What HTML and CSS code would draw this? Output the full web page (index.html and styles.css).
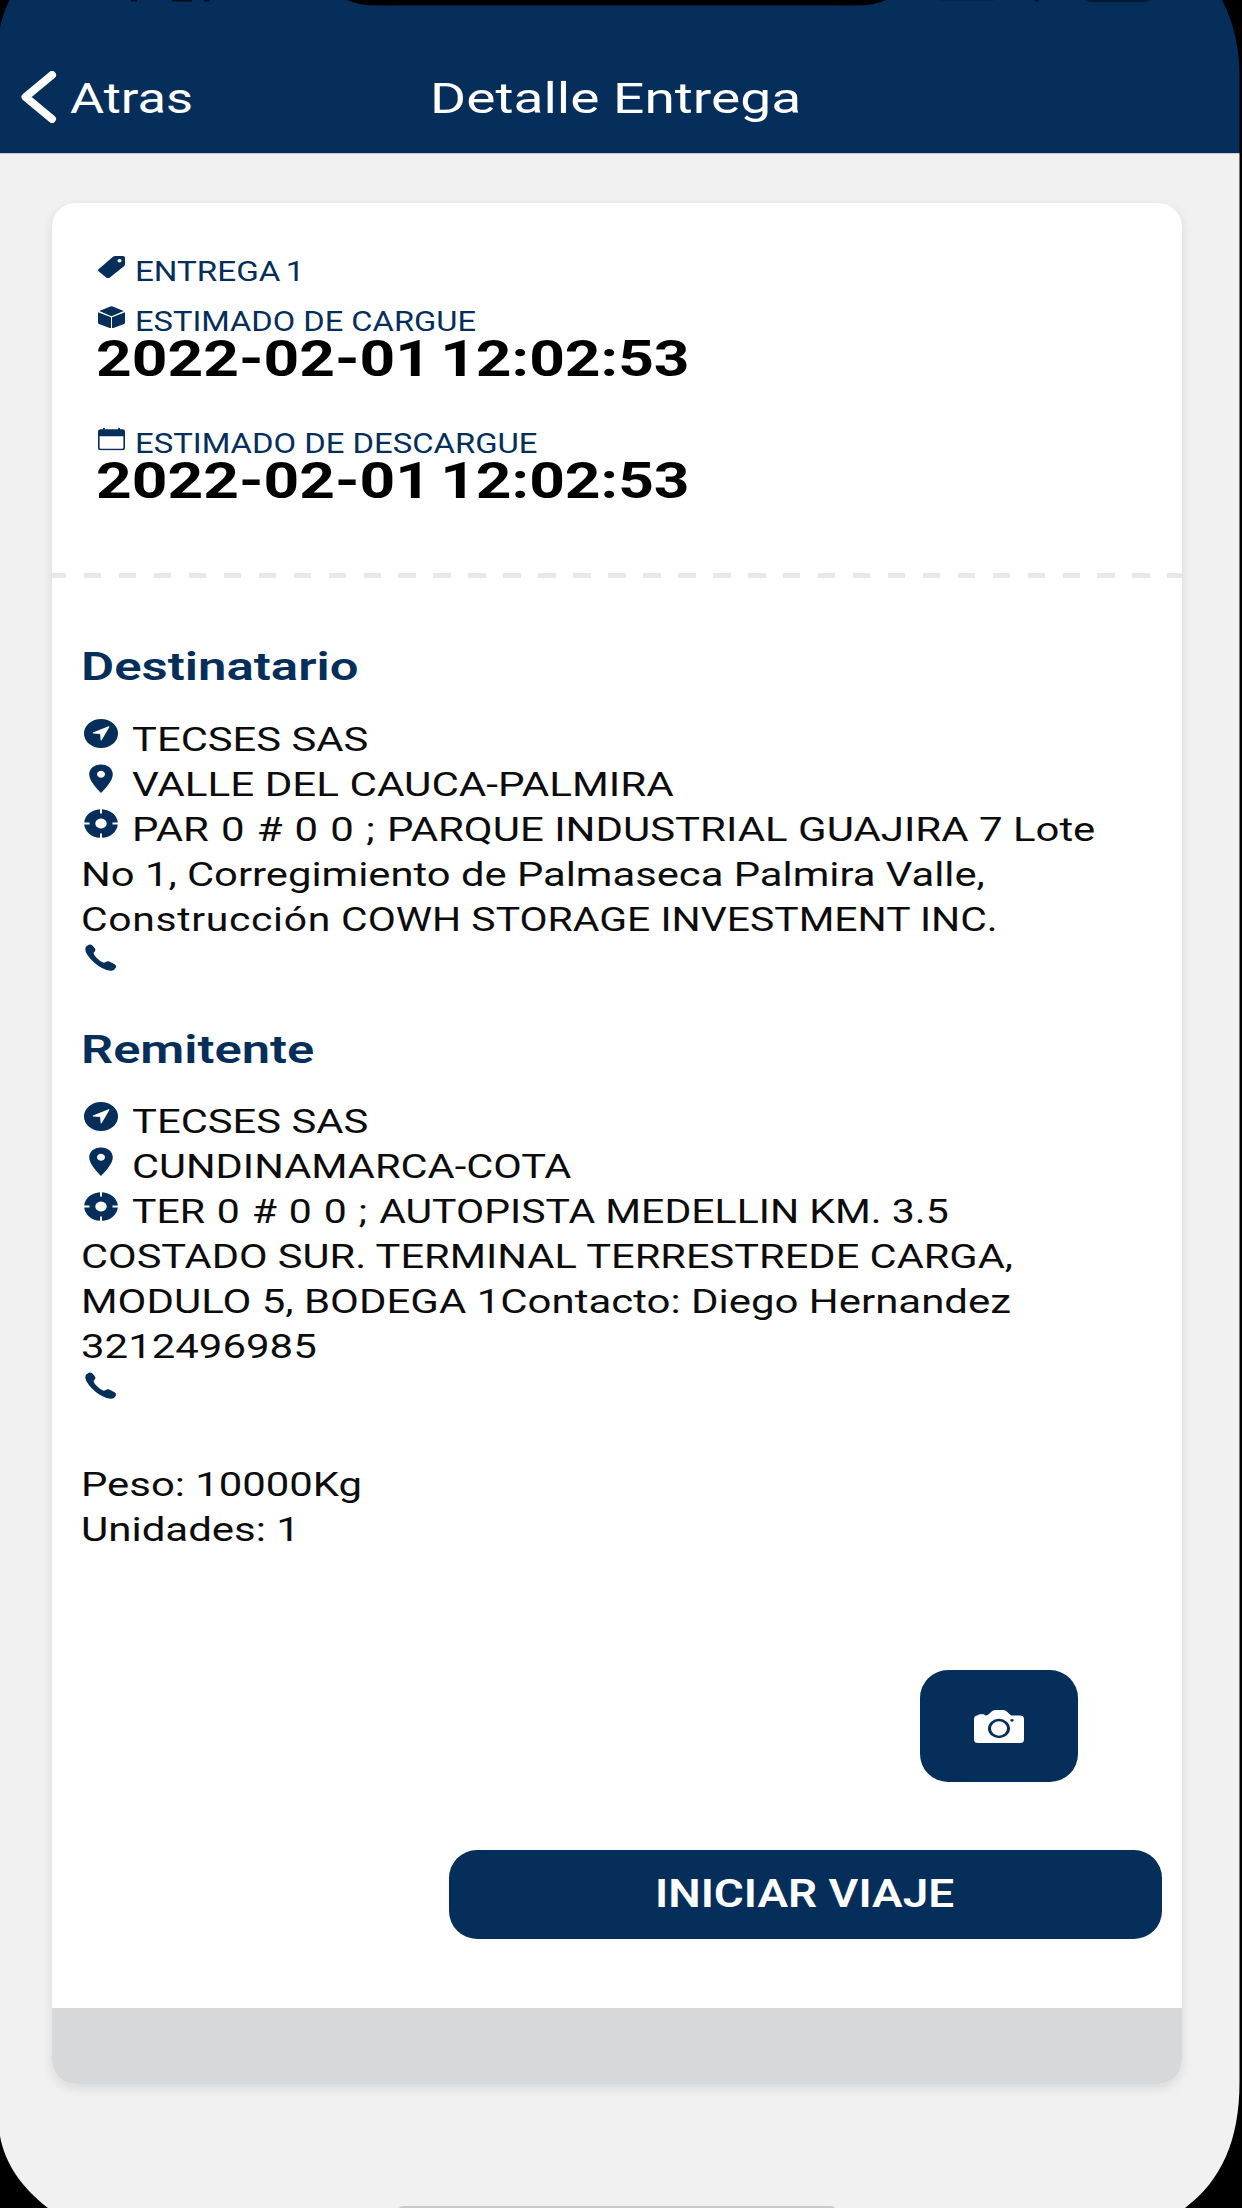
FILE: index.html
```
<!DOCTYPE html>
<html lang="es">
<head>
<meta charset="utf-8">
<title>Detalle Entrega</title>
<link rel="stylesheet" href="styles.css">
</head>
<body>
<svg class="defs" width="0" height="0" aria-hidden="true">
  <symbol id="i-tag" viewBox="0 0 27 23" preserveAspectRatio="none"><path fill-rule="evenodd" d="M15 .8 Q16 0 17.500 0 H25 Q27 0 27 1.800 V8.500 Q27 9.600 26 10.500 L11.500 22.300 Q10 23.500 8.500 22.300 L.8 15.800 Q-.6 14.500 .8 13.200 Z M21.500 3 a2 1.800 0 1 0 .01 0 Z"/></symbol>
  <symbol id="i-cube" viewBox="0 0 27 22" preserveAspectRatio="none"><path d="M1.300 4.900 L12.400 .4 Q13.500 0 14.600 .4 L25.700 4.900 L13.500 9.900 Z M0 6 L13 11 V22 L1 17.600 Q0 17.200 0 16.400 Z M27 6 L14 11 V22 L26 17.600 Q27 17.200 27 16.400 Z"/></symbol>
  <symbol id="i-calendar" viewBox="0 0 27 22" preserveAspectRatio="none"><path fill-rule="evenodd" d="M5 0 H6.800 V1.300 H20.200 V0 H22 V1.300 H24.500 Q27 1.300 27 3.500 V19.500 Q27 21.700 24.500 21.700 H2.500 Q0 21.700 0 19.500 V3.500 Q0 1.300 2.500 1.300 H5 Z M1.600 8 V19 Q1.600 20.300 3 20.300 H24 Q25.400 20.300 25.400 19 V8 Z"/></symbol>
  <symbol id="i-navigate" viewBox="0 0 34 29" preserveAspectRatio="none"><path fill-rule="evenodd" d="M17 0 A17 14.500 0 1 1 17 29 A17 14.500 0 1 1 17 0 Z M24.600 7.300 L9 13.500 Q8 14.100 9.200 14.500 L16.100 15 L16.600 21 Q17.200 22 17.800 21.100 L25.400 8.100 Q25.700 7 24.600 7.300 Z"/></symbol>
  <symbol id="i-pin" viewBox="0 0 34 29" preserveAspectRatio="none"><path fill-rule="evenodd" d="M17 .5 C24 .5 28.800 4.800 28.800 10.200 C28.800 17 21 24.500 17 29 C13 24.500 5.200 17 5.200 10.200 C5.200 4.800 10 .5 17 .5 Z M17 6.800 a4 3.500 0 1 0 .01 0 Z"/></symbol>
  <symbol id="i-locate" viewBox="0 0 34 29" preserveAspectRatio="none"><path fill-rule="evenodd" d="M16 .2 V4.500 H18 V.2 A17 14.500 0 0 1 33.800 13.500 H28.500 V15.500 H33.800 A17 14.500 0 0 1 18 28.800 V24.500 H16 V28.800 A17 14.500 0 0 1 .2 15.500 H5.500 V13.500 H.2 A17 14.500 0 0 1 16 .2 Z M17 9.500 a5.700 5 0 1 0 .01 0 Z"/></symbol>
  <symbol id="i-phone" viewBox="0 0 34 29" preserveAspectRatio="none"><path d="M2.200 2.600 L4.700 .7 Q6.600 0 8.200 1.200 L11 4.600 Q12 6.300 10.800 7.400 L9.500 8.700 Q9.400 10.200 12 13.200 Q15.500 17 19.200 18.600 Q20.300 19 21.300 18.300 L22.700 17.500 Q24.500 16.800 26.300 17.900 L31 20.400 Q32.800 21.700 31.900 23.500 L30 26 Q27.500 27.600 22.500 26 Q14 23 7.500 16 Q1.500 9.500 1.300 5.500 Q1.300 3.600 2.200 2.600 Z"/></symbol>
  <symbol id="i-camera" viewBox="0 0 50 33" preserveAspectRatio="none"><path fill-rule="evenodd" d="M18 1.300 Q19.800 0 22 0 H28.500 Q30.800 0 32.500 1.300 L36.500 5 Q37.300 5.600 38.500 5.600 H46 Q50 5.600 50 9 V29.500 Q50 33 46 33 H4 Q0 33 0 29.500 V9 Q0 5.700 3.500 5.600 L5 4.200 H10 L11.300 5.600 Q13 5.600 14 4.800 Z M25 8.800 A11 9.700 0 1 0 25 28.200 A11 9.700 0 1 0 25 8.800 Z M38 8.900 a1.700 1.400 0 1 0 .01 0 Z"/><ellipse cx="25" cy="18.500" rx="8" ry="7.200"/></symbol>
</svg>

<div class="screen">
  <header class="bar">
    <a class="back">
      <svg class="chevron" viewBox="0 0 36 52"><path d="M31 4 L4.500 26 L31 48"/></svg>
      <span class="fit bar-text" style="--k:1.2468">Atras</span>
    </a>
    <h1 class="fit bar-text bar-title" style="--k:1.312">Detalle Entrega</h1>
  </header>

  <main class="content">
    <article class="card">
      <section class="summary">
        <div class="label first"><svg class="ico-s"><use href="#i-tag"/></svg><span class="fit tight" style="--k:1.185">ENTREGA 1</span></div>
        <div class="label"><svg class="ico-s"><use href="#i-cube"/></svg><span class="fit" style="--k:1.1655">ESTIMADO DE CARGUE</span></div>
        <div class="date"><span class="fit" style="--k:1.2454">2022-02-01 12:02:53</span></div>
        <div class="label second"><svg class="ico-s"><use href="#i-calendar"/></svg><span class="fit" style="--k:1.172">ESTIMADO DE DESCARGUE</span></div>
        <div class="date"><span class="fit" style="--k:1.2454">2022-02-01 12:02:53</span></div>
      </section>
      <div class="divider"></div>
      <section class="details">
        <div class="party">
          <h2><span class="fit" style="--k:1.288">Destinatario</span></h2>
          <div class="row"><svg class="ico"><use href="#i-navigate"/></svg><span class="fit" style="--k:1.2278">TECSES SAS</span></div>
          <div class="row"><svg class="ico"><use href="#i-pin"/></svg><span class="fit" style="--k:1.2401">VALLE DEL CAUCA-PALMIRA</span></div>
          <div class="row"><svg class="ico"><use href="#i-locate"/></svg><span class="fit" style="--k:1.2335"><span class="code">PAR 0 # 0 0 ; </span>PARQUE INDUSTRIAL GUAJIRA 7 Lote</span></div>
          <div class="row"><span class="fit" style="--k:1.2276">No 1, Corregimiento de Palmaseca Palmira Valle,</span></div>
          <div class="row"><span class="fit" style="--k:1.2023"><span class="loose">Construcción</span> COWH STORAGE INVESTMENT INC.</span></div>
          <div class="row"><svg class="ico"><use href="#i-phone"/></svg></div>
        </div>
        <div class="party">
          <h2><span class="fit" style="--k:1.281">Remitente</span></h2>
          <div class="row"><svg class="ico"><use href="#i-navigate"/></svg><span class="fit" style="--k:1.2278">TECSES SAS</span></div>
          <div class="row"><svg class="ico"><use href="#i-pin"/></svg><span class="fit" style="--k:1.2215">CUNDINAMARCA-COTA</span></div>
          <div class="row"><svg class="ico"><use href="#i-locate"/></svg><span class="fit" style="--k:1.2055"><span class="code">TER 0 # 0 0 ; </span>AUTOPISTA MEDELLIN KM. 3.5</span></div>
          <div class="row"><span class="fit" style="--k:1.2228">COSTADO SUR. TERMINAL TERRESTREDE CARGA,</span></div>
          <div class="row"><span class="fit" style="--k:1.2338">MODULO 5, BODEGA 1Contacto: Diego Hernandez</span></div>
          <div class="row"><span class="fit" style="--k:1.2335">3212496985</span></div>
          <div class="row"><svg class="ico"><use href="#i-phone"/></svg></div>
        </div>
        <div class="load">
          <div class="row"><span class="fit" style="--k:1.23">Peso: 10000Kg</span></div>
          <div class="row"><span class="fit" style="--k:1.235">Unidades: 1</span></div>
        </div>
      </section>
      <div class="actions">
        <button class="btn photo" aria-label="Foto"><svg><use href="#i-camera"/></svg></button>
        <button class="btn start"><span class="fit" style="--k:1.1615">INICIAR VIAJE</span></button>
      </div>
      <footer class="card-foot"></footer>
    </article>
  </main>

  <svg class="bezel" viewBox="0 0 1242 2208" aria-hidden="true">
    <path d="M0 0 H9.500 Q3 13 0 28 Z"/>
    <path d="M347 0 Q358 5.500 380 5.500 H855 Q875 5.500 886 0 Z"/>
    <path d="M1222 0 Q1239.500 34 1239.500 76 V2082 C1239.500 2140 1222 2180 1185 2208 H1242 V0 Z"/>
    <path d="M0 2136 C5 2164 22 2188 48 2208 H0 Z"/>
    <path d="M131 0 h6 v1.600 h-6 Z M172 0 h20 v1.600 h-20 Z M204 0 h6 v1.600 h-6 Z" opacity=".7"/>
    <path d="M940 0 h54 v1 h-54 Z" opacity=".15"/>
    <path d="M1035 0 h4 v1.500 h-4 Z" opacity=".6"/>
    <path d="M1085 0 H1150 Q1147 2.300 1143 2.300 H1092 Q1088 2.300 1085 0 Z" opacity=".45"/>
    <path class="home" d="M399 2208 Q400 2206 404 2206 H830 Q834 2206 835 2208 Z"/>
  </svg>
</div>
</body>
</html>
```
FILE: styles.css
```
* { box-sizing: border-box; }

body {
  margin: 0;
  background: #f1f1f1;
  font-family: Roboto, "Liberation Sans", sans-serif;
  color: #0c0c0c;
}

.defs { position: absolute; }

.screen {
  position: relative;
  display: flex;
  flex-direction: column;
  height: 2208px;
  overflow: hidden;
}

/* wide lettering: each line carries its own horizontal stretch */
.fit {
  display: inline-block;
  white-space: nowrap;
  transform: scaleX(var(--k));
  transform-origin: left center;
}

.tight { word-spacing: -2.500px; }
.code { word-spacing: 1.400px; }
.loose { letter-spacing: .55px; }

.bar {
  display: grid;
  grid-template-columns: 429.7px 1fr;
  align-items: start;
  height: 153px;
  padding-top: 71px;
  background: #052e5b;
  box-shadow: 0 1px 0 #c3ccd6;
  color: #fff;
}

.back {
  display: flex;
  padding-left: 20.500px;
}

.chevron {
  flex: none;
  width: 36px;
  height: 52px;
  margin-right: 13.500px;
  fill: none;
  stroke: #fff;
  stroke-width: 8;
  stroke-linecap: round;
  stroke-linejoin: round;
}

.bar-text {
  margin: 2px 0 0;
  font-size: 42px;
  font-weight: 400;
  line-height: 52px;
}

.bar-title { justify-self: start; }

.content { padding: 50px 60px 0 51.500px; }

.card {
  display: flex;
  flex-direction: column;
  height: 1880.500px;
  overflow: hidden;
  border-radius: 24px;
  background: #fff;
  box-shadow: 0 4px 12px rgba(0, 0, 0, .1);
}

.summary {
  height: 370px;
  padding: 52.500px 0 0 44.500px;
}

.label {
  display: flex;
  align-items: flex-start;
  height: 32px;
  font-size: 28px;
  line-height: 32px;
  color: #052e5b;
}

.label.first { margin-bottom: 18px; }
.label.second { margin-top: 47.500px; }

.ico-s {
  flex: none;
  width: 27px;
  height: 22.500px;
  margin: 0 10.500px 0 1.500px;
  fill: #052e5b;
}

.date {
  height: 43px;
  font-size: 50px;
  font-weight: 700;
  line-height: 43px;
  word-spacing: -5px;
  color: #000;
}

.divider {
  flex: none;
  height: 5px;
  background: repeating-linear-gradient(90deg, #e8e8e8 0 17.500px, transparent 17.500px 34.950px);
  background-position-x: -3px;
}

.details { padding: 65.200px 0 0 29.500px; }

.party { margin-bottom: 38.900px; }

.party h2 {
  margin: 0 0 25.700px;
  font-size: 39.500px;
  font-weight: 600;
  line-height: 48px;
  color: #052e5b;
}

.row {
  display: flex;
  align-items: flex-start;
  height: 45px;
  font-size: 34px;
  line-height: 45px;
}

.ico {
  flex: none;
  width: 34px;
  height: 29px;
  margin: 2.300px 13.500px 0 3px;
  fill: #052e5b;
}

.load { margin-top: 47.300px; }

.actions {
  display: flex;
  flex-direction: column;
  align-items: flex-end;
  gap: 68px;
  margin-top: auto;
  padding-right: 20.300px;
}

.btn {
  display: flex;
  align-items: center;
  padding: 0;
  border: 0;
  border-radius: 28px;
  background: #052e5b;
  color: #fff;
  font-family: inherit;
}

.photo {
  justify-content: center;
  width: 158.500px;
  height: 112px;
  margin-right: 83.500px;
}

.photo svg {
  width: 50px;
  height: 33px;
  fill: #fff;
}

.start {
  width: 713px;
  height: 88.500px;
  padding-left: 206px;
  font-size: 39.500px;
  font-weight: 600;
  line-height: 88px;
}

.card-foot {
  flex: none;
  height: 75.500px;
  margin-top: 69.500px;
  background: #d7d8da;
}

.bezel {
  position: absolute;
  inset: 0;
  width: 1242px;
  height: 2208px;
}

.home { fill: #c9c9c9; }
```
